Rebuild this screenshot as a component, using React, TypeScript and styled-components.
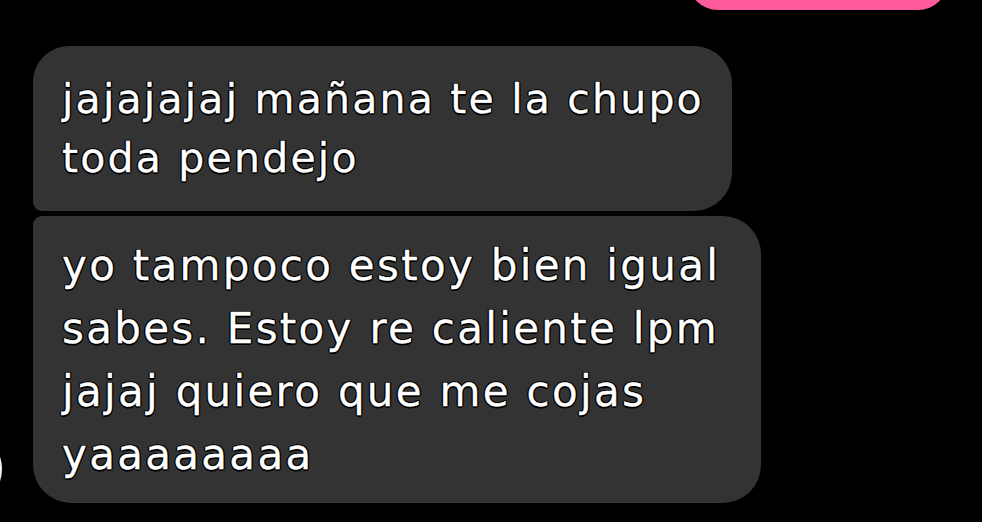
import React from "react";
import styled, { createGlobalStyle } from "styled-components";

const Global = createGlobalStyle`
  html, body { margin: 0; padding: 0; background: #000; }
  body { width: 982px; height: 522px; overflow: hidden; font-family: "DejaVu Sans", sans-serif; }
`;

const Screen = styled.div`
  width: 982px;
  height: 522px;
  background: #000;
  display: flex;
  flex-direction: column;
  overflow: hidden;
`;

const OutRow = styled.div`
  display: flex;
  justify-content: flex-end;
  padding-right: 34px;
`;

const OutBubble = styled.div`
  width: 260px;
  height: 60px;
  margin-top: -50px;
  background: #fe5b9d;
  border-radius: 32px;
`;

const Group = styled.div`
  display: flex;
  align-items: flex-end;
  margin-top: 36px;
  gap: 31px;
`;

const Avatar = styled.div`
  flex: none;
  width: 80px;
  height: 80px;
  margin-left: -78px;
  margin-bottom: -6px;
  border-radius: 50%;
  background: #f2f2f2;
`;

const Stack = styled.div`
  display: flex;
  flex-direction: column;
  gap: 5px;
`;

const Bubble = styled.div<{ $w: number; $first?: boolean; $last?: boolean; $size: number; $lh: number; $pt: number; $pb: number; $ls: number }>`
  box-sizing: border-box;
  width: ${(p) => p.$w}px;
  background: #333333;
  padding: ${(p) => p.$pt}px 10px ${(p) => p.$pb}px 29px;
  border-radius: ${(p) => (p.$first ? 36 : 9)}px 38px 38px ${(p) => (p.$last ? 38 : 9)}px;
  color: #fff;
  font-family: "DejaVu Sans", sans-serif;
  font-size: ${(p) => p.$size}px;
  line-height: ${(p) => p.$lh}px;
  letter-spacing: ${(p) => p.$ls}px;
  -webkit-text-stroke: 0.3px #fff;
  text-shadow: -1.5px 0 #000, 1.5px 0 #000, 0 -1.5px #000, 0 1.5px #000,
    -1px -1px #000, 1px 1px #000, -1px 1px #000, 1px -1px #000;
`;

const Line = styled.div`
  white-space: nowrap;
`;

export default function App() {
  return (
    <>
      <Global />
      <Screen>
        <OutRow>
          <OutBubble />
        </OutRow>
        <Group>
          <Avatar />
          <Stack>
            <Bubble $w={699} $first $size={41} $lh={59} $pt={24} $pb={23} $ls={2.2}>
              <Line>jajajajaj mañana te la chupo</Line>
              <Line>toda pendejo</Line>
            </Bubble>
            <Bubble $w={728} $last $size={42} $lh={63} $pt={18} $pb={17} $ls={2.3}>
              <Line>yo tampoco estoy bien igual</Line>
              <Line>sabes. Estoy re caliente lpm</Line>
              <Line>jajaj quiero que me cojas</Line>
              <Line>yaaaaaaaa</Line>
            </Bubble>
          </Stack>
        </Group>
      </Screen>
    </>
  );
}
